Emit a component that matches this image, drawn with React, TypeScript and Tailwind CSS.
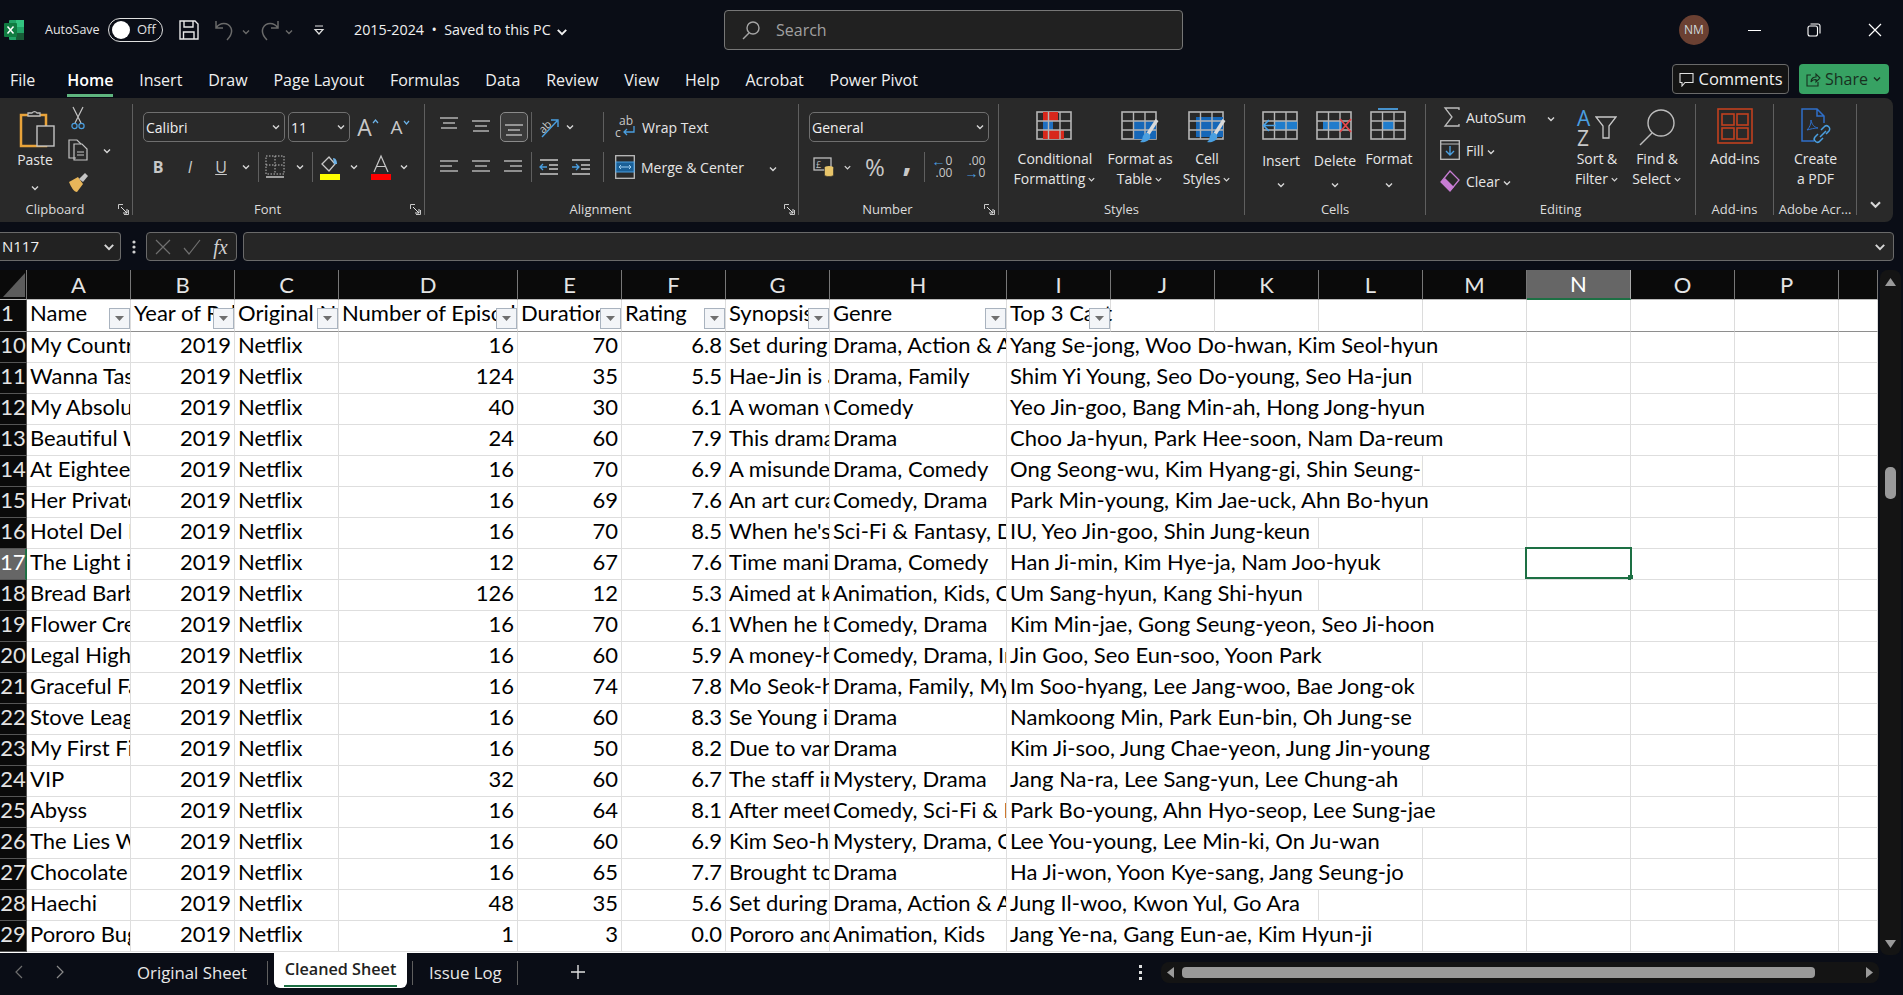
import type { ReactNode } from 'react';

const ui = "font-['Open_Sans','Noto_Sans',sans-serif]";

const columns = ['A', 'B', 'C', 'D', 'E', 'F', 'G', 'H', 'I', 'J', 'K', 'L', 'M', 'N', 'O', 'P', ''];

const headers = ['Name', 'Year of Release', 'Original Network', 'Number of Episodes', 'Duration', 'Rating', 'Synopsis', 'Genre', 'Top 3 Cast'];

// span = how many columns the cast text spills over
const rows = [
  { n: '10', name: 'My Country: The', eps: 16, dur: 70, rate: '6.8', syn: 'Set during the', genre: 'Drama, Action & Adventure', cast: 'Yang Se-jong, Woo Do-hwan, Kim Seol-hyun', span: 5 },
  { n: '11', name: 'Wanna Taste', eps: 124, dur: 35, rate: '5.5', syn: 'Hae-Jin is a', genre: 'Drama, Family', cast: 'Shim Yi Young, Seo Do-young, Seo Ha-jun', span: 4 },
  { n: '12', name: 'My Absolute', eps: 40, dur: 30, rate: '6.1', syn: 'A woman who', genre: 'Comedy', cast: 'Yeo Jin-goo, Bang Min-ah, Hong Jong-hyun', span: 5 },
  { n: '13', name: 'Beautiful World', eps: 24, dur: 60, rate: '7.9', syn: 'This drama is', genre: 'Drama', cast: 'Choo Ja-hyun, Park Hee-soon, Nam Da-reum', span: 5 },
  { n: '14', name: 'At Eighteen', eps: 16, dur: 70, rate: '6.9', syn: 'A misunder', genre: 'Drama, Comedy', cast: 'Ong Seong-wu, Kim Hyang-gi, Shin Seung-ho', span: 4 },
  { n: '15', name: 'Her Private Life', eps: 16, dur: 69, rate: '7.6', syn: 'An art curator', genre: 'Comedy, Drama', cast: 'Park Min-young, Kim Jae-uck, Ahn Bo-hyun', span: 5 },
  { n: '16', name: 'Hotel Del Luna', eps: 16, dur: 70, rate: '8.5', syn: "When he's a", genre: 'Sci-Fi & Fantasy, Drama', cast: 'IU, Yeo Jin-goo, Shin Jung-keun', span: 3 },
  { n: '17', name: 'The Light in Your', eps: 12, dur: 67, rate: '7.6', syn: 'Time manip', genre: 'Drama, Comedy', cast: 'Han Ji-min, Kim Hye-ja, Nam Joo-hyuk', span: 4 },
  { n: '18', name: 'Bread Barbershop', eps: 126, dur: 12, rate: '5.3', syn: 'Aimed at kids', genre: 'Animation, Kids, Comedy', cast: 'Um Sang-hyun, Kang Shi-hyun', span: 3 },
  { n: '19', name: 'Flower Crew', eps: 16, dur: 70, rate: '6.1', syn: 'When he be', genre: 'Comedy, Drama', cast: 'Kim Min-jae, Gong Seung-yeon, Seo Ji-hoon', span: 5 },
  { n: '20', name: 'Legal High', eps: 16, dur: 60, rate: '5.9', syn: 'A money-hun', genre: 'Comedy, Drama, Investigation', cast: 'Jin Goo, Seo Eun-soo, Yoon Park', span: 4 },
  { n: '21', name: 'Graceful Family', eps: 16, dur: 74, rate: '7.8', syn: 'Mo Seok-hee', genre: 'Drama, Family, Mystery', cast: 'Im Soo-hyang, Lee Jang-woo, Bae Jong-ok', span: 4 },
  { n: '22', name: 'Stove League', eps: 16, dur: 60, rate: '8.3', syn: 'Se Young is', genre: 'Drama', cast: 'Namkoong Min, Park Eun-bin, Oh Jung-se', span: 4 },
  { n: '23', name: 'My First First', eps: 16, dur: 50, rate: '8.2', syn: 'Due to various', genre: 'Drama', cast: 'Kim Ji-soo, Jung Chae-yeon, Jung Jin-young', span: 5 },
  { n: '24', name: 'VIP', eps: 32, dur: 60, rate: '6.7', syn: 'The staff in', genre: 'Mystery, Drama', cast: 'Jang Na-ra, Lee Sang-yun, Lee Chung-ah', span: 4 },
  { n: '25', name: 'Abyss', eps: 16, dur: 64, rate: '8.1', syn: 'After meeting', genre: 'Comedy, Sci-Fi & Fantasy', cast: 'Park Bo-young, Ahn Hyo-seop, Lee Sung-jae', span: 5 },
  { n: '26', name: 'The Lies Within', eps: 16, dur: 60, rate: '6.9', syn: 'Kim Seo-hee', genre: 'Mystery, Drama, Crime', cast: 'Lee You-young, Lee Min-ki, On Ju-wan', span: 4 },
  { n: '27', name: 'Chocolate', eps: 16, dur: 65, rate: '7.7', syn: 'Brought to', genre: 'Drama', cast: 'Ha Ji-won, Yoon Kye-sang, Jang Seung-jo', span: 4 },
  { n: '28', name: 'Haechi', eps: 48, dur: 35, rate: '5.6', syn: 'Set during the', genre: 'Drama, Action & Adventure', cast: 'Jung Il-woo, Kwon Yul, Go Ara', span: 3 },
  { n: '29', name: 'Pororo Bugs', eps: 1, dur: 3, rate: '0.0', syn: 'Pororo and', genre: 'Animation, Kids', cast: 'Jang Ye-na, Gang Eun-ae, Kim Hyun-ji', span: 4 },
];

function Chev({ c = '#d6d6d6', s = 10 }: { c?: string; s?: number }) {
  return (
    <svg width={s} height={s} viewBox="0 0 10 10" className="inline-block shrink-0">
      <path d="M2 3.5 5 6.5 8 3.5" fill="none" stroke={c} strokeWidth="1.4" />
    </svg>
  );
}

function Sep({ className = '' }: { className?: string }) {
  return <div className={`w-px h-[30px] bg-[#5f5f5f] shrink-0 ${className}`} />;
}

function Launcher() {
  return (
    <svg width="11" height="11" viewBox="0 0 11 11" className="justify-self-end mr-[3px] mt-[1px]">
      <path d="M.5 5V.5H5M10.5 6v4.5H6" fill="none" stroke="#c8c8c8" />
      <path d="M3 3 9 9M9 5v4H5" fill="none" stroke="#e0e0e0" />
    </svg>
  );
}

function Group({ width, label, launcher, children }: { width: string; label: string; launcher?: boolean; children: ReactNode }) {
  return (
    <div className={`${width} shrink-0 mt-[6px] h-[111px] border-r border-[#5f5f5f] flex flex-col`}>
      <div className="h-[95px]">{children}</div>
      {launcher ? (
        <div className="h-[16px] pt-[3px] grid grid-cols-[1fr_auto_1fr_22px] items-center text-[13px] leading-[14px] text-[#dcdcdc]">
          <span />
          <span className="whitespace-nowrap">{label}</span>
          <span />
          <Launcher />
        </div>
      ) : (
        <div className="h-[16px] pt-[3px] text-center text-[13px] leading-[14px] whitespace-nowrap text-[#dcdcdc]">{label}</div>
      )}
    </div>
  );
}

function Combo({ width, text }: { width: string; text: string }) {
  return (
    <div className={`${width} h-[30px] rounded-[5px] border border-[#6f6f6f] flex items-center justify-between pl-[2px] pr-[3px] text-[14px] text-[#f0f0f0]`}>
      <span>{text}</span>
      <Chev />
    </div>
  );
}

function Slot({ width, children }: { width: string; children: ReactNode }) {
  return <div className={`${width} h-[30px] flex items-center justify-center shrink-0`}>{children}</div>;
}

function BigButton({ width, icon, lines, chevLine }: { width: string; icon: ReactNode; lines: string[]; chevLine?: boolean }) {
  return (
    <div className={`${width} shrink-0 flex flex-col items-center text-[14px] leading-[20px] text-[#e6e6e6]`}>
      <div className="h-[45px] pt-[4px] flex items-start justify-center">{icon}</div>
      {lines.map((l, i) => (
        <div key={l} className="flex items-center gap-[2px] whitespace-nowrap">
          {l}
          {chevLine && i === lines.length - 1 && <Chev s={9} />}
        </div>
      ))}
    </div>
  );
}

function AlignLines({ rows: r, y = 0 }: { rows: number[][]; y?: number }) {
  return (
    <svg width="20" height="20" viewBox="0 0 20 20">
      {r.map(([x1, x2], i) => (
        <line key={i} x1={x1} x2={x2} y1={4 + y + i * 5} y2={4 + y + i * 5} stroke="#c8c8c8" strokeWidth="1.3" />
      ))}
    </svg>
  );
}

function ExcelLogo() {
  return (
    <svg width="20" height="24" viewBox="0 0 20 24">
      <rect x="5" y="2" width="15" height="20" rx="1" fill="#21a366" />
      <rect x="12" y="2" width="8" height="7" fill="#33c481" />
      <rect x="12" y="15" width="8" height="7" fill="#185c37" />
      <rect x="0" y="5" width="13" height="14" rx="1" fill="#107c41" />
      <path d="M3.5 8.5 9.5 15.5M9.5 8.5 3.5 15.5" stroke="#fff" strokeWidth="1.5" />
    </svg>
  );
}

function PasteIcon() {
  return (
    <svg width="36" height="40" viewBox="0 0 36 40">
      <rect x="2" y="7" width="25" height="31" fill="none" stroke="#e8a33a" strokeWidth="2.5" />
      <path d="M9 8V5h4a3 3 0 0 1 5 0h3v3z" fill="#2a2a2a" stroke="#bdbdbd" strokeWidth="1.3" />
      <rect x="18" y="18" width="17" height="20" fill="#2a2a2a" stroke="#c4c4c4" strokeWidth="1.4" />
    </svg>
  );
}

function GridIcon({ fill, children }: { fill?: ReactNode; children?: ReactNode }) {
  return (
    <svg width="38" height="36" viewBox="0 0 38 36">
      <rect x="1" y="4" width="34" height="27" fill="none" stroke="#b5b5b5" strokeWidth="1.6" />
      {fill}
      <path d="M1 13H35M1 22H35M12.5 4V31M24 4V31" stroke="#b5b5b5" strokeWidth="1.4" />
      {children}
    </svg>
  );
}

function Brush() {
  return (
    <g>
      <path d="M36 12 27 26" stroke="#d9d9d9" strokeWidth="3.5" />
      <path d="M25 25c3 0 5 2 4 5s-6 5-10 4c3-2 2-4 3-6s2-3 3-3z" fill="#4a9fe0" />
    </g>
  );
}

function App() {
  return (
    <div className={`${ui} w-[1903px] h-[995px] overflow-hidden bg-[#0a0d16] flex flex-col text-white`}>
      {/* title bar */}
      <div className="h-[60px] flex items-center shrink-0">
        <div className="w-[724px] flex items-center shrink-0">
          <div className="ml-[4px]"><ExcelLogo /></div>
          <span className="ml-[21px] w-[54px] text-[12.5px] text-[#e6e6e6] whitespace-nowrap">AutoSave</span>
          <div className="ml-[9px] w-[55px] h-[24px] rounded-full border border-[#e0e0e0] flex items-center pl-[3px] gap-[7px]">
            <div className="w-[18px] h-[18px] rounded-full bg-white" />
            <span className="text-[13px] text-[#e0e0e0]">Off</span>
          </div>
          <svg width="20" height="20" viewBox="0 0 20 20" className="ml-[16px]" fill="none" stroke="#e8e8e8" strokeWidth="1.4">
            <path d="M1 1H16L19 4V19H1z" />
            <path d="M5 1V7H14V1M4.5 19V12H15V19" />
          </svg>
          <svg width="20" height="22" viewBox="0 0 20 22" className="ml-[15px]" fill="none" stroke="#6a6a6a" strokeWidth="1.5">
            <path d="M2 2V9H9M2 9C6 3 14 3 17 9c2 5-1 9-4 12" />
          </svg>
          <div className="ml-[7px]"><Chev c="#6a6a6a" /></div>
          <svg width="20" height="22" viewBox="0 0 20 22" className="ml-[9px]" fill="none" stroke="#6a6a6a" strokeWidth="1.5">
            <path d="M18 2V9H11M18 9C14 3 6 3 3 9c-2 5 1 9 4 12" />
          </svg>
          <div className="ml-[4px]"><Chev c="#6a6a6a" /></div>
          <svg width="12" height="12" viewBox="0 0 12 12" className="ml-[19px]" fill="none" stroke="#e0e0e0" strokeWidth="1.2">
            <path d="M2 2H10M2 5.5 6 10 10 5.5z" />
          </svg>
          <span className="ml-[29px] text-[14.3px] text-[#f0f0f0] whitespace-nowrap">2015-2024 &nbsp;•&nbsp; Saved to this PC</span>
          <div className="ml-[4px]"><Chev c="#f0f0f0" s={14} /></div>
        </div>
        <div className="w-[459px] h-[40px] rounded-[4px] bg-[#212121] border border-[#777] flex items-center pl-[16px] gap-[15px] text-[16px] text-[#a0a0a0]">
          <svg width="20" height="20" viewBox="0 0 20 20" fill="none" stroke="#a5a5a5" strokeWidth="1.4">
            <circle cx="12" cy="8" r="6" />
            <path d="M8 13 2 19" />
          </svg>
          <span className="-mt-[1px]">Search</span>
        </div>
        <div className="flex-1 flex items-center">
          <div className="ml-[496px] w-[30px] h-[30px] rounded-full bg-[#6b4032] flex items-center justify-center text-[12px] text-[#cfd8dc]">NM</div>
          <div className="ml-[39px] w-[13px] h-px bg-white" />
          <svg width="14" height="14" viewBox="0 0 14 14" className="ml-[46px]" fill="none" stroke="#fff" strokeWidth="1.1">
            <rect x="1" y="3" width="9.5" height="10" rx="2" />
            <path d="M3.5 1H11a2 2 0 0 1 2 2V10.5" />
          </svg>
          <svg width="14" height="14" viewBox="0 0 14 14" className="ml-[47px]" stroke="#fff" strokeWidth="1.2">
            <path d="M1 1 13 13M13 1 1 13" />
          </svg>
        </div>
      </div>

      {/* tab row */}
      <div className="h-[38px] shrink-0 flex items-start text-[16px] text-[#f0f0f0]">
        <div className="flex gap-[25.8px] pl-[10px] pt-[8px] leading-[24px] whitespace-nowrap">
          <span>File</span>
          <span className="ml-[6px] font-semibold text-white relative">
            Home
            <span className="absolute left-0 right-0 top-[26px] h-[3px] bg-[#5fb57f]" />
          </span>
          <span>Insert</span>
          <span>Draw</span>
          <span>Page Layout</span>
          <span>Formulas</span>
          <span>Data</span>
          <span>Review</span>
          <span>View</span>
          <span>Help</span>
          <span>Acrobat</span>
          <span>Power Pivot</span>
        </div>
        <div className="ml-auto flex gap-[10px] pt-[4px] pr-[14px]">
          <div className="w-[117px] h-[30px] rounded-[4px] border border-[#6a6a6a] bg-[#141414] flex items-center justify-center gap-[5px] text-[16.5px]">
            <svg width="15" height="15" viewBox="0 0 15 15" fill="none" stroke="#e0e0e0" strokeWidth="1.1">
              <path d="M1 1.5H14V10.5H6L3 14V10.5H1z" />
            </svg>
            Comments
          </div>
          <div className="w-[90px] h-[30px] rounded-[4px] bg-[#37a263] flex items-center justify-center gap-[4px] text-[#17301f]">
            <svg width="15" height="15" viewBox="0 0 15 15" fill="none" stroke="#17301f" strokeWidth="1.1">
              <path d="M5 3H1V14H12V10M5 10c0-4 3-5 5-5V2l4 4-4 4V7.5c-2 0-4 .5-5 2.5z" />
            </svg>
            Share
            <Chev c="#17301f" />
          </div>
        </div>
      </div>

      {/* ribbon */}
      <div className="h-[124px] w-[1893px] shrink-0 rounded-r-[8px] bg-[#292929] flex text-[#e6e6e6] text-[14px]">
        <Group width="w-[133px]" label="Clipboard" launcher>
          <div className="flex">
            <div className="ml-[4px] w-[62px] flex flex-col items-center pt-[4px]">
              <div className="ml-[4px]"><PasteIcon /></div>
              <span className="mt-[2px] leading-[20px]">Paste</span>
              <div className="mt-[6px]"><Chev /></div>
            </div>
            <div className="pt-px flex flex-col gap-[7px]">
              <div className="h-[25px] w-[24px] flex items-center justify-center">
                <svg width="14" height="24" viewBox="0 0 14 24" fill="none" strokeWidth="1.2">
                  <path d="M2 1 10 17M12 1 4 17" stroke="#c4c4c4" />
                  <circle cx="3.5" cy="20" r="2.6" stroke="#4a9fe0" />
                  <circle cx="10.5" cy="20" r="2.6" stroke="#4a9fe0" />
                </svg>
              </div>
              <div className="h-[25px] flex items-center">
                <div className="w-[24px] flex justify-center">
                  <svg width="20" height="22" viewBox="0 0 20 22" fill="none" stroke="#c4c4c4" strokeWidth="1.2">
                    <path d="M8 19H1V1H9L13 5" />
                    <path d="M6 5H14L19 10V21H6z" />
                    <path d="M9 13H16M9 16H16" />
                  </svg>
                </div>
                <div className="ml-[12px]"><Chev /></div>
              </div>
              <div className="h-[25px] w-[24px] flex items-center justify-center">
                <svg width="21" height="22" viewBox="0 0 21 22" fill="none">
                  <path d="M1 11 10 6l5 7-6 8C6 21 3 16 1 11z" fill="#e8b65a" />
                  <path d="M11 8 17 2l3 3-5 6z" fill="#c4c4c4" />
                </svg>
              </div>
            </div>
          </div>
        </Group>

        <Group width="w-[292px]" label="Font" launcher>
          <div className="pl-[10px] pt-[8px] flex items-center">
            <Combo width="w-[142px]" text="Calibri" />
            <div className="ml-[3px]"><Combo width="w-[62px]" text="11" /></div>
            <Slot width="w-[32px] ml-[2px]">
              <span className="text-[23px] text-[#c8c8c8] leading-none flex items-start">A
                <svg width="7" height="5" viewBox="0 0 7 5" className="mt-[3px]"><path d="M1 4 3.5 1 6 4" fill="none" stroke="#6db3e8" strokeWidth="1.2" /></svg>
              </span>
            </Slot>
            <Slot width="w-[32px]">
              <span className="text-[19px] text-[#c8c8c8] leading-none flex items-start">A
                <svg width="7" height="5" viewBox="0 0 7 5" className="mt-[2px]"><path d="M1 1 3.5 4 6 1" fill="none" stroke="#6db3e8" strokeWidth="1.2" /></svg>
              </span>
            </Slot>
          </div>
          <div className="mt-[10px] pl-[9px] flex items-center text-[#c8c8c8]">
            <Slot width="w-[32px]"><span className="font-bold text-[16px]">B</span></Slot>
            <Slot width="w-[32px]"><span className="italic text-[16px]">I</span></Slot>
            <Slot width="w-[30px]"><span className="underline text-[16px]">U</span></Slot>
            <Slot width="w-[20px]"><Chev /></Slot>
            <Sep className="ml-[2px]" />
            <Slot width="w-[32px]">
              <svg width="20" height="24" viewBox="0 0 20 24" fill="none" stroke="#bdbdbd">
                <path d="M1 1H19V19H1zM10 1V19M1 10H19" strokeDasharray="1.5 1.5" />
                <path d="M1 22H19" strokeWidth="1.6" />
              </svg>
            </Slot>
            <Slot width="w-[17px]"><Chev /></Slot>
            <Sep className="ml-[4px]" />
            <Slot width="w-[34px]">
              <svg width="20" height="26" viewBox="0 0 20 26">
                <path d="M2 10 9 3l6 7-6 7z" fill="none" stroke="#c8c8c8" strokeWidth="1.3" />
                <path d="M13 4c3 0 4 3 4 6h-3z" fill="#6db3e8" />
                <rect x="0" y="20" width="20" height="6" fill="#ffff00" />
              </svg>
            </Slot>
            <Slot width="w-[13px]"><Chev /></Slot>
            <Slot width="w-[32px] ml-[5px]">
              <svg width="20" height="26" viewBox="0 0 20 26">
                <path d="M3 18 10 2l7 16M5.5 12.5H14.5" fill="none" stroke="#c8c8c8" strokeWidth="1.2" />
                <rect x="0" y="20" width="20" height="6" fill="#ff0000" />
              </svg>
            </Slot>
            <Slot width="w-[14px]"><Chev /></Slot>
          </div>
        </Group>

        <Group width="w-[374px]" label="Alignment" launcher>
          <div className="pl-[8px] pt-[8px] flex items-center">
            <Slot width="w-[32px]"><AlignLines rows={[[1, 19], [4, 16], [2, 18]]} y={-3} /></Slot>
            <Slot width="w-[32px]"><AlignLines rows={[[1, 19], [4, 16], [2, 18]]} y={0} /></Slot>
            <Slot width="w-[28px] ml-[3px] rounded-[5px] border border-[#8a8a8a] bg-[#3a3a3a]"><AlignLines rows={[[1, 19], [4, 16], [2, 18]]} y={4} /></Slot>
            <Sep className="ml-[3px]" />
            <Slot width="w-[28px] ml-[3px]">
              <svg width="22" height="24" viewBox="0 0 22 24" fill="none">
                <text x="1" y="15" fontSize="11" fill="#c8c8c8" transform="rotate(-45 8 12)">ab</text>
                <path d="M4 22 19 6M13 5H20V12" stroke="#4a9fe0" strokeWidth="1.4" />
              </svg>
            </Slot>
            <Slot width="w-[14px]"><Chev /></Slot>
            <Sep className="ml-[26px]" />
            <div className="ml-[10px] w-[24px] flex justify-center">
              <svg width="22" height="26" viewBox="0 0 22 26">
                <text x="4" y="11" fontSize="12" fill="#c8c8c8">ab</text>
                <text x="0" y="23" fontSize="12" fill="#c8c8c8">c</text>
                <path d="M19 12V18H9M12 15 9 18 12 21" fill="none" stroke="#4a9fe0" strokeWidth="1.3" />
              </svg>
            </div>
            <span className="ml-[4px] whitespace-nowrap">Wrap Text</span>
          </div>
          <div className="mt-[10px] pl-[8px] flex items-center">
            <Slot width="w-[32px]"><AlignLines rows={[[1, 19], [1, 13], [1, 19]]} /></Slot>
            <Slot width="w-[32px]"><AlignLines rows={[[1, 19], [4, 16], [1, 19]]} /></Slot>
            <Slot width="w-[32px]"><AlignLines rows={[[1, 19], [7, 19], [1, 19]]} /></Slot>
            <Sep className="ml-[2px]" />
            <Slot width="w-[34px]">
              <svg width="20" height="20" viewBox="0 0 20 20" fill="none" strokeWidth="1.3">
                <path d="M1 3H19M10 8H19M10 12H19M1 17H19" stroke="#c8c8c8" />
                <path d="M8 10H1M4 7 1 10 4 13" stroke="#4a9fe0" />
              </svg>
            </Slot>
            <Slot width="w-[30px]">
              <svg width="20" height="20" viewBox="0 0 20 20" fill="none" strokeWidth="1.3">
                <path d="M1 3H19M10 8H19M10 12H19M1 17H19" stroke="#c8c8c8" />
                <path d="M1 10H8M5 7 8 10 5 13" stroke="#4a9fe0" />
              </svg>
            </Slot>
            <Sep className="ml-[7px]" />
            <div className="ml-[9px] w-[24px] flex justify-center">
              <svg width="20" height="24" viewBox="0 0 20 24" fill="none">
                <rect x=".7" y=".7" width="18.6" height="22.6" stroke="#bdbdbd" strokeWidth="1.3" />
                <rect x="1" y="7" width="18" height="10" fill="#1a5f96" stroke="#4a9fe0" />
                <path d="M4 12H16M6 10 4 12 6 14M14 10 16 12 14 14" stroke="#9fd0f2" />
              </svg>
            </div>
            <span className="ml-[4px] w-[106px] whitespace-nowrap">Merge &amp; Center</span>
            <div className="ml-[21px]"><Chev /></div>
          </div>
        </Group>

        <Group width="w-[200px]" label="Number" launcher>
          <div className="pl-[10px] pt-[8px]"><Combo width="w-[180px]" text="General" /></div>
          <div className="mt-[10px] pl-[10px] flex items-center text-[#c8c8c8]">
            <Slot width="w-[30px]">
              <svg width="22" height="22" viewBox="0 0 22 22" fill="none">
                <rect x="1" y="2" width="17" height="12" stroke="#bdbdbd" strokeWidth="1.3" />
                <text x="3" y="12" fontSize="9" fill="#bdbdbd">£</text>
                <ellipse cx="16" cy="12" rx="4.5" ry="2" fill="#e8c56a" />
                <path d="M11.5 12V19c0 2 9 2 9 0V12" fill="#e8c56a" stroke="#2a2a2a" strokeWidth=".6" />
              </svg>
            </Slot>
            <Slot width="w-[16px]"><Chev s={9} /></Slot>
            <Slot width="w-[32px] ml-[4px]"><span className="text-[24px] leading-none">%</span></Slot>
            <Slot width="w-[32px]"><span className="text-[32px] font-bold leading-none -mt-[14px]">,</span></Slot>
            <Sep className="ml-px" />
            <Slot width="w-[34px]">
              <div className="flex flex-col items-end text-[12px] leading-[12px]">
                <span className="flex items-center"><span className="text-[#4a9fe0] text-[14px] leading-[12px]">←</span>0</span>
                <span>.00</span>
              </div>
            </Slot>
            <Slot width="w-[32px]">
              <div className="flex flex-col items-end text-[12px] leading-[12px]">
                <span>.00</span>
                <span className="flex items-center"><span className="text-[#4a9fe0] text-[14px] leading-[12px]">→</span>0</span>
              </div>
            </Slot>
          </div>
        </Group>

        <Group width="w-[246px]" label="Styles">
          <div className="flex pl-[13px]">
            <BigButton
              width="w-[86px]"
              chevLine
              lines={['Conditional', 'Formatting']}
              icon={
                <GridIcon
                  fill={
                    <>
                      <rect x="7" y="4" width="15" height="9" fill="#d8281c" />
                      <rect x="7" y="13" width="10" height="9" fill="#1f6fc0" />
                      <rect x="7" y="22" width="21" height="9" fill="#d8281c" />
                    </>
                  }
                />
              }
            />
            <BigButton
              width="w-[84px]"
              chevLine
              lines={['Format as', 'Table']}
              icon={
                <GridIcon fill={<rect x="12" y="13" width="23" height="18" fill="#1667b8" />}>
                  <Brush />
                </GridIcon>
              }
            />
            <BigButton
              width="w-[50px]"
              chevLine
              lines={['Cell', 'Styles']}
              icon={
                <GridIcon fill={<rect x="8" y="9" width="27" height="20" fill="#1667b8" />}>
                  <Brush />
                </GridIcon>
              }
            />
          </div>
        </Group>

        <Group width="w-[181px]" label="Cells">
          <div className="flex pl-[9px]">
            <div className="w-[54px] flex flex-col items-center text-[14px] leading-[20px]">
              <div className="h-[47px] pt-[4px]">
                <GridIcon fill={<rect x="12" y="13" width="23" height="9" fill="#1f7ccc" />}>
                  <path d="M14 17.5H2M7 12 1.5 17.5 7 23" fill="none" stroke="#4aa3e8" strokeWidth="1.6" />
                </GridIcon>
              </div>
              Insert
              <div className="mt-[3px]"><Chev /></div>
            </div>
            <div className="w-[54px] flex flex-col items-center text-[14px] leading-[20px]">
              <div className="h-[47px] pt-[4px]">
                <GridIcon fill={<rect x="7" y="13" width="19" height="9" fill="#1f7ccc" />}>
                  <path d="M24 11 35 24M35 11 24 24" stroke="#e5484d" strokeWidth="1.8" />
                </GridIcon>
              </div>
              Delete
              <div className="mt-[3px]"><Chev /></div>
            </div>
            <div className="w-[54px] flex flex-col items-center text-[14px] leading-[20px]">
              <div className="h-[45px] pt-[4px]">
                <GridIcon fill={<rect x="12" y="13" width="12" height="9" fill="#1f7ccc" />}>
                  <path d="M8 1H28" stroke="#4a9fe0" strokeWidth="1.8" />
                </GridIcon>
              </div>
              Format
              <div className="mt-[5px]"><Chev /></div>
            </div>
          </div>
        </Group>

        <Group width="w-[270px]" label="Editing">
          <div className="flex">
            <div className="w-[141px] pl-[14px] shrink-0">
              <div className="h-[26px] flex items-center">
                <div className="w-[24px] flex justify-center">
                  <svg width="18" height="20" viewBox="0 0 18 20" fill="none" stroke="#bdbdbd" strokeWidth="1.3">
                    <path d="M16 3V1H2L9 10 2 19H16V17" />
                  </svg>
                </div>
                <span className="ml-[2px] w-[62px]">AutoSum</span>
                <div className="ml-[18px]"><Chev /></div>
              </div>
              <div className="mt-[7px] h-[26px] flex items-center">
                <div className="w-[24px] flex justify-start">
                  <svg width="20" height="20" viewBox="0 0 20 20" fill="none">
                    <rect x=".7" y=".7" width="18.6" height="18.6" stroke="#bdbdbd" strokeWidth="1.3" />
                    <path d="M1 4H19" stroke="#bdbdbd" />
                    <path d="M10 6V15M6 11 10 15 14 11" stroke="#4a9fe0" strokeWidth="1.4" />
                  </svg>
                </div>
                <span className="ml-[2px]">Fill</span>
                <div className="ml-[2px]"><Chev /></div>
              </div>
              <div className="mt-[5px] h-[26px] flex items-center">
                <div className="w-[24px] flex justify-start">
                  <svg width="20" height="22" viewBox="0 0 20 22" fill="none">
                    <path d="M10 1 19 10 10 21 1 12z" stroke="#c77dd4" strokeWidth="1.3" />
                    <path d="M5 8 14 17 10 21 1 12z" fill="#c77dd4" />
                  </svg>
                </div>
                <span className="ml-[2px]">Clear</span>
                <div className="ml-[2px]"><Chev /></div>
              </div>
            </div>
            <BigButton
              width="w-[60px]"
              chevLine
              lines={['Sort &', 'Filter']}
              icon={
                <div className="relative w-[40px] h-[38px] text-[21px] leading-[20px]">
                  <span className="text-[#4a9fe0]">A</span>
                  <br />
                  <span className="text-[#c8c8c8]">Z</span>
                  <svg width="22" height="26" viewBox="0 0 22 26" className="absolute right-0 top-[6px]" fill="none" stroke="#c8c8c8" strokeWidth="1.3">
                    <path d="M1 3H21L14 12V24H8V12z" />
                  </svg>
                </div>
              }
            />
            <BigButton
              width="w-[60px]"
              chevLine
              lines={['Find &', 'Select']}
              icon={
                <svg width="38" height="38" viewBox="0 0 38 38" fill="none" stroke="#bdbdbd" strokeWidth="1.4">
                  <circle cx="23" cy="15" r="13" />
                  <path d="M14 25 2 37" />
                </svg>
              }
            />
          </div>
        </Group>

        <Group width="w-[78px]" label="Add-ins">
          <BigButton
            width="w-[78px]"
            lines={['Add-ins']}
            icon={
              <svg width="36" height="36" viewBox="0 0 36 36" fill="none" stroke="#c1401f" strokeWidth="1.6">
                <rect x="1" y="1" width="34" height="34" />
                <rect x="5" y="6" width="12" height="11" />
                <rect x="20" y="6" width="11" height="11" />
                <rect x="5" y="20" width="12" height="11" />
                <rect x="20" y="20" width="11" height="11" />
              </svg>
            }
          />
        </Group>

        <Group width="w-[83px]" label="Adobe Acr...">
          <BigButton
            width="w-[83px]"
            lines={['Create', 'a PDF']}
            icon={
              <svg width="32" height="38" viewBox="0 0 32 38" fill="none" stroke="#2f6fc9" strokeWidth="1.5">
                <path d="M14 33H2V1H17L24 8V15M17 1V8H24" />
                <path d="M7 22c3-3 4-6 4-10 1 5 3 7 7 8-4 0-7 1-11 2z" strokeWidth="1" />
                <path d="M21 22l3-3a3 3 0 0 1 5 4l-3 3M23 30l-3 3a3 3 0 0 1-5-4l3-3M20 29l6-6" stroke="#4a9fe0" />
              </svg>
            }
          />
        </Group>
        <div className="flex-1 flex items-end justify-center pb-[10px]">
          <Chev s={15} />
        </div>
      </div>

      {/* formula bar */}
      <div className="h-[48px] shrink-0 flex pt-[10px] pb-[9px] text-[16px]">
        <div className="w-[121px] h-[29px] rounded-r-[4px] border border-l-0 border-[#6a6a6a] bg-[#222] flex items-center justify-between pl-[2px] pr-[4px] text-[15px] text-[#f0f0f0]">
          N117
          <Chev s={14} />
        </div>
        <div className="w-[25px] h-[29px] flex items-center justify-center">
          <svg width="4" height="14" viewBox="0 0 4 14" fill="#d0d0d0">
            <circle cx="2" cy="2" r="1.6" />
            <circle cx="2" cy="7" r="1.6" />
            <circle cx="2" cy="12" r="1.6" />
          </svg>
        </div>
        <div className="w-[91px] h-[29px] rounded-[4px] border border-[#6a6a6a] bg-[#222] flex items-center justify-center gap-[12px]">
          <svg width="16" height="16" viewBox="0 0 16 16" stroke="#6f6f6f" strokeWidth="1.2"><path d="M1 1 15 15M15 1 1 15" /></svg>
          <svg width="18" height="16" viewBox="0 0 18 16" fill="none" stroke="#6f6f6f" strokeWidth="1.2"><path d="M1 9 6 15 17 1" /></svg>
          <span className="font-['Liberation_Serif',serif] italic text-[20px] text-[#d0d0d0]">fx</span>
        </div>
        <div className="ml-[6px] w-[1651px] h-[29px] rounded-[4px] border border-[#6a6a6a] bg-[#262626] flex items-center justify-end pr-[6px]">
          <Chev s={14} />
        </div>
      </div>

      {/* sheet */}
      <div className="h-[683px] shrink-0 flex">
        <div className="w-[1878px] overflow-hidden bg-white font-['Lato',sans-serif] text-[22px] text-black">
          <table className="table-fixed w-[1878px] border-separate border-spacing-0">
            <colgroup>
              <col className="w-[27px]" />
              <col className="w-[104px]" />
              <col className="w-[104px]" />
              <col className="w-[104px]" />
              <col className="w-[179px]" />
              <col className="w-[104px]" />
              <col className="w-[104px]" />
              <col className="w-[104px]" />
              <col className="w-[177px]" />
              <col className="w-[104px]" />
              <col className="w-[104px]" />
              <col className="w-[104px]" />
              <col className="w-[104px]" />
              <col className="w-[104px]" />
              <col className="w-[104px]" />
              <col className="w-[104px]" />
              <col className="w-[104px]" />
              <col className="w-[39px]" />
            </colgroup>
            <thead>
              <tr>
                <th className="h-[30px] p-0 bg-[#0a0a0a] border-r border-b border-r-[#777] border-b-[#bbb]">
                  <svg width="26" height="29" viewBox="0 0 26 29" className="block">
                    <path d="M25 3V27H3z" fill="#5c5c5c" />
                  </svg>
                </th>
                {columns.map((c) => (
                  <th
                    key={c || 'q'}
                    className={
                      c === 'N'
                        ? 'h-[30px] p-0 font-normal leading-[28px] bg-[#666] text-white border-r border-b-2 border-r-[#aaa] border-b-[#1d7044]'
                        : 'h-[30px] p-0 font-normal leading-[28px] bg-[#0a0a0a] text-[#e4e4e4] border-r border-b border-r-[#777] border-b-[#bbb]'
                    }
                  >
                    {c}
                  </th>
                ))}
              </tr>
            </thead>
            <tbody>
              <tr>
                <td className="h-[32px] p-0 pl-[1px] align-top leading-[26px] bg-[#0a0a0a] text-[#e4e4e4] border-r border-b border-r-[#555] border-b-[#8e8e8e]">1</td>
                {headers.map((h) => (
                  <td key={h} className="h-[32px] p-0 relative align-top border-r border-b border-[#dcdcdc] border-b-[#8e8e8e]">
                    <div className={h === 'Top 3 Cast' ? 'whitespace-nowrap pl-[3px] leading-[26px]' : 'overflow-hidden whitespace-nowrap pl-[3px] pr-[3px] leading-[26px]'}>{h}</div>
                    <div className="absolute right-0 top-[8px] w-[21px] h-[21px] border border-[#a9b3bf] bg-[#f3f5f8] flex items-center justify-center">
                      <svg width="9" height="5" viewBox="0 0 9 5"><path d="M0 0H9L4.5 5z" fill="#6f6f6f" /></svg>
                    </div>
                  </td>
                ))}
                {columns.slice(9).map((c) => (
                  <td key={c || 'q'} className="h-[32px] p-0 border-r border-b border-[#dcdcdc] border-b-[#8e8e8e]" />
                ))}
              </tr>
              {rows.map((r) => {
                const active = r.n === '17';
                return (
                  <tr key={r.n}>
                    <td
                      className={
                        active
                          ? 'h-[31px] p-0 text-center align-top leading-[26px] bg-[#666] text-white border-r-2 border-b border-r-[#1d7044] border-b-[#555]'
                          : 'h-[31px] p-0 text-center align-top leading-[26px] bg-[#0a0a0a] text-[#e4e4e4] border-r border-b border-[#555]'
                      }
                    >
                      {r.n}
                    </td>
                    <Cell>{r.name}</Cell>
                    <Cell right>2019</Cell>
                    <Cell>Netflix</Cell>
                    <Cell right>{r.eps}</Cell>
                    <Cell right>{r.dur}</Cell>
                    <Cell right>{r.rate}</Cell>
                    <Cell>{r.syn}</Cell>
                    <Cell>{r.genre}</Cell>
                    <Cell span={r.span}>{r.cast}</Cell>
                    {columns.slice(8 + r.span).map((c) => (
                      <td key={c || 'q'} className="h-[31px] p-0 relative border-r border-b border-[#dedede]">
                        {active && c === 'N' && (
                          <div className="absolute -left-[2px] -top-[2px] w-[107px] h-[32px] border-2 border-[#1d7044]">
                            <div className="absolute -right-[3px] -bottom-[3px] w-[5px] h-[5px] bg-[#1d7044] border-0" />
                          </div>
                        )}
                      </td>
                    ))}
                  </tr>
                );
              })}
            </tbody>
          </table>
        </div>
        <div className="w-[25px] bg-[#0a0d16] flex justify-center">
          <div className="w-[21px] h-[685px] rounded-[8px] bg-[#141414] flex flex-col items-center pt-[8px]">
            <svg width="11" height="8" viewBox="0 0 11 8"><path d="M5.5 0 11 8H0z" fill="#9a9a9a" /></svg>
            <div className="mt-[181px] w-[11px] h-[32px] rounded-[5px] bg-[#999]" />
            <svg width="11" height="8" viewBox="0 0 11 8" className="mt-auto mb-[7px]"><path d="M5.5 8 11 0H0z" fill="#9a9a9a" /></svg>
          </div>
        </div>
      </div>

      {/* sheet tabs */}
      <div className="flex-1 flex text-[16.8px] text-[#e8e8e8] relative border-b-2 border-[#262626]">
        <div className="w-[137px] shrink-0 flex items-center pl-[15px] gap-[33px] h-[37px]">
          <svg width="8" height="14" viewBox="0 0 8 14" fill="none" stroke="#6f6f6f" strokeWidth="1.2"><path d="M7 1 1 7 7 13" /></svg>
          <svg width="8" height="14" viewBox="0 0 8 14" fill="none" stroke="#8a8a8a" strokeWidth="1.2"><path d="M1 1 7 7 1 13" /></svg>
        </div>
        <div className="h-[42px] pb-[2px] flex items-center w-[131px] shrink-0">
          <span className="w-[130px] whitespace-nowrap">Original Sheet</span>
          <div className="w-px h-[24px] bg-[#5f5f5f]" />
        </div>
        <div className="ml-[6px] w-[133px] h-[35px] bg-white rounded-b-[6px] px-[10px] text-[#222] font-semibold text-[16.2px] flex flex-col items-center shrink-0">
          <span className="leading-[31px] pt-[1px] whitespace-nowrap">Cleaned Sheet</span>
          <div className="w-full h-[2px] bg-[#1d7044]" />
        </div>
        <div className="ml-[5px] w-px h-[24px] mt-[8px] bg-[#5f5f5f]" />
        <span className="ml-[16px] w-[88px] leading-[40px] whitespace-nowrap">Issue Log</span>
        <div className="w-px h-[24px] mt-[8px] bg-[#5f5f5f]" />
        <svg width="14" height="14" viewBox="0 0 14 14" className="ml-[53px] mt-[12px]" stroke="#e0e0e0" strokeWidth="1.4"><path d="M7 0V14M0 7H14" /></svg>
        <div className="ml-[554px] mt-[12px] flex flex-col gap-[3px] h-[16px]">
          <div className="w-[3px] h-[3px] bg-[#e0e0e0]" />
          <div className="w-[3px] h-[3px] bg-[#e0e0e0]" />
          <div className="w-[3px] h-[3px] bg-[#e0e0e0]" />
        </div>
        <div className="ml-[19px] mt-[9px] w-[718px] h-[21px] rounded-[8px] bg-[#141414] flex items-center pl-[6px] pr-[6px]">
          <svg width="7" height="11" viewBox="0 0 7 11"><path d="M7 0V11L0 5.5z" fill="#9a9a9a" /></svg>
          <div className="ml-[8px] w-[633px] h-[11px] rounded-[4px] bg-[#999]" />
          <svg width="7" height="11" viewBox="0 0 7 11" className="ml-auto"><path d="M0 0V11L7 5.5z" fill="#9a9a9a" /></svg>
        </div>
      </div>
    </div>
  );
}

function Cell({ children, right, span }: { children: ReactNode; right?: boolean; span?: number }) {
  return (
    <td colSpan={span} className="h-[31px] p-0 align-top overflow-hidden border-r border-b border-[#dedede]">
      <div className={right ? 'overflow-hidden whitespace-nowrap text-right px-[3px] leading-[26px]' : 'overflow-hidden whitespace-nowrap pl-[3px] leading-[26px]'}>
        {children}
      </div>
    </td>
  );
}

export default App;
